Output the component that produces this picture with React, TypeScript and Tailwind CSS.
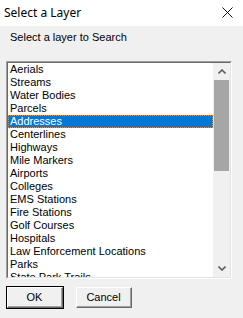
import React from 'react';

const layers = [
  'Aerials',
  'Streams',
  'Water Bodies',
  'Parcels',
  'Addresses',
  'Centerlines',
  'Highways',
  'Mile Markers',
  'Airports',
  'Colleges',
  'EMS Stations',
  'Fire Stations',
  'Golf Courses',
  'Hospitals',
  'Law Enforcement Locations',
  'Parks',
  'State Park Trails',
];

const ClassicButton: React.FC<{ label: string; primary?: boolean }> = ({ label, primary }) => (
  <div
    className={
      'w-[58px] h-[23px] ' + (primary ? 'border border-black' : 'border border-transparent')
    }
  >
    <div className="w-full h-full border-t border-l border-white border-b border-r border-b-[#696969] border-r-[#696969]">
      <div className="w-full h-full border-b border-r border-[#a0a0a0] bg-[#f0f0f0] flex items-center justify-center text-[11px] leading-none text-black">
        {label}
      </div>
    </div>
  </div>
);

const App: React.FC = () => {
  const selected = 4;

  return (
    <div
      className="w-[243px] h-[318px] bg-[#f0f0f0] flex flex-col overflow-hidden"
      style={{ fontFamily: '"Liberation Sans", Arial, sans-serif' }}
    >
      {/* title bar */}
      <div className="h-[26px] bg-white flex items-center justify-between pl-[4px] pr-[10px] shrink-0">
        <span
          className="text-[12px] text-black leading-none pb-[1px]"
          style={{ fontFamily: '"Noto Sans", "Open Sans", sans-serif' }}
        >
          Select a Layer
        </span>
        <svg width="11" height="11" viewBox="0 0 11 11" className="mb-[1px]">
          <path d="M0.5 0.5 L10.5 10.5 M10.5 0.5 L0.5 10.5" stroke="#111" strokeWidth="1" />
        </svg>
      </div>

      <div className="pl-[10px] pt-[5px] text-[11px] leading-[13px] text-black">
        Select a layer to Search
      </div>

      {/* listbox */}
      <div className="ml-[6px] mt-[17px] w-[226px] h-[218px] border-t border-l border-[#a0a0a0] border-b border-r border-b-white border-r-white shrink-0">
        <div className="w-full h-full border-t border-l border-[#696969] border-b border-r border-b-[#e3e3e3] border-r-[#e3e3e3] bg-white flex">
          <div className="flex-1 overflow-hidden text-[11px] leading-[13px] text-black">
            {layers.map((name, i) => (
              <div
                key={name}
                className={
                  i === selected
                    ? 'h-[13px] pl-[1px] bg-[#0078d7] text-white border border-dotted border-[#ff8728] flex items-center'
                    : 'h-[13px] pl-[2px] flex items-center whitespace-nowrap'
                }
              >
                {name}
              </div>
            ))}
          </div>
          {/* scrollbar */}
          <div className="w-[17px] bg-[#f0f0f0] flex flex-col">
            <div className="h-[17px] flex items-center justify-center">
              <svg width="8" height="5" viewBox="0 0 8 5">
                <path d="M0.5 4.5 L4 1 L7.5 4.5" stroke="#606060" strokeWidth="1.6" fill="none" />
              </svg>
            </div>
            <div className="h-[91px] bg-[#a6a6a6] mx-[1px]" />
            <div className="flex-1" />
            <div className="h-[17px] flex items-center justify-center">
              <svg width="8" height="5" viewBox="0 0 8 5">
                <path d="M0.5 0.5 L4 4 L7.5 0.5" stroke="#606060" strokeWidth="1.6" fill="none" />
              </svg>
            </div>
          </div>
        </div>
      </div>

      <div className="flex gap-[11px] pl-[6px] mt-[7px]">
        <ClassicButton label="OK" primary />
        <ClassicButton label="Cancel" />
      </div>
    </div>
  );
};

export default App;
